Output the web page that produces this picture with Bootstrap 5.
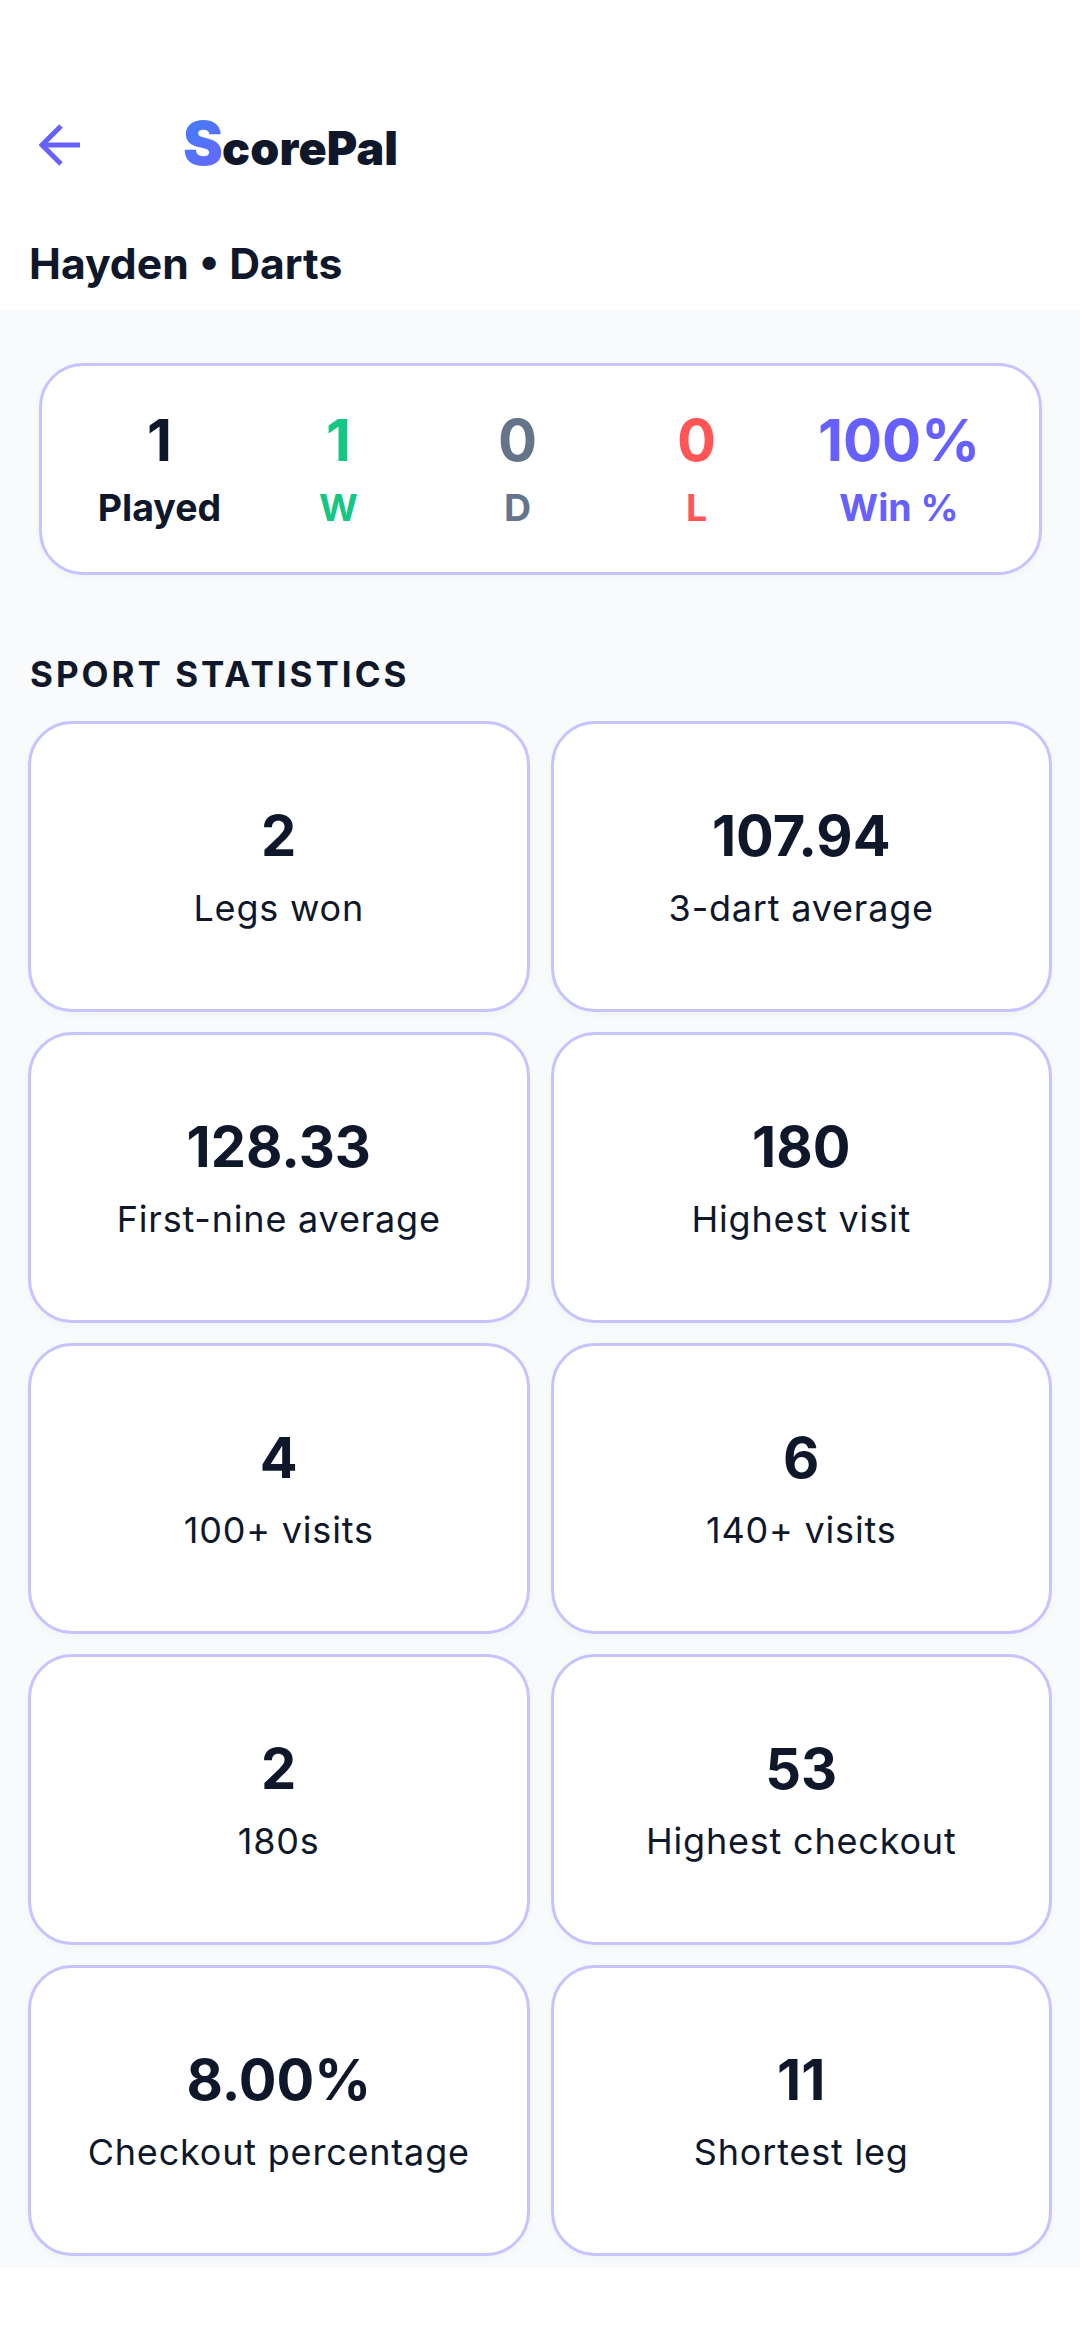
<!DOCTYPE html>
<html lang="en">
<head>
<meta charset="utf-8">
<title>ScorePal</title>
<link href="https://cdn.jsdelivr.net/npm/bootstrap@5.3.0/dist/css/bootstrap.min.css" rel="stylesheet">
<style>
body{font-family:"Inter","Liberation Sans",sans-serif;color:#0f172a;background:#fff;width:1080px;height:2340px;overflow:hidden}
.app-top{height:310px;padding-top:116px}
.head-row{height:58px;padding-left:39px}
.brand{font-family:"Inter","Liberation Sans",sans-serif;font-weight:900;font-size:46.5px;line-height:58px;margin-left:102px;letter-spacing:.2px}
.brand-s{font-size:60px;font-weight:900;letter-spacing:-1px;background:linear-gradient(135deg,#3b82f6,#6c63ff);-webkit-background-clip:text;background-clip:text;color:transparent}
.page-title{font-size:42.7px;font-weight:700;line-height:52px;margin:0;padding:64px 0 0 29px}
.sheet{background:#f8fafc;height:1958px;padding:53px 28px 0}
.summary{margin:0 10px 0 11px;height:212px;border:3px solid #c6c3ff;border-radius:44px;background:#fff;box-shadow:0 3px 8px rgba(15,23,42,.03);display:grid;grid-template-columns:179px 179px 179px 179px 226px;padding:41px 25px 0 28px}
.sum-num{font-size:58px;font-weight:700;line-height:66px}
.sum-lab{font-size:37.5px;font-weight:700;line-height:44px;margin-top:13px}
.tone-green{color:#16c784}.tone-gray{color:#64748b}.tone-red{color:#ff5555}.tone-purple{color:#6560ff}
.sect-title{font-size:35px;font-weight:700;letter-spacing:3px;line-height:40px;margin:79px 0 27px 2px}
.stat-row{--bs-gutter-x:21px;--bs-gutter-y:20px}
.stat-box{height:291px;border:3px solid #c6c3ff;border-radius:44px;background:#fff;box-shadow:0 3px 8px rgba(15,23,42,.03)}
.stat-num{font-size:56px;font-weight:700;line-height:66px}
.stat-lab{font-size:36px;font-weight:400;line-height:44px;letter-spacing:.8px;margin-top:17px}
</style>
</head>
<body>
<div class="app-top">
  <div class="head-row d-flex align-items-center">
    <svg width="42" height="42" viewBox="0 0 42 42" fill="none" stroke="#6560ff" stroke-width="5" aria-label="Back"><path d="M41 21H3"/><path d="M22 2 3 21l19 19"/></svg>
    <div class="brand"><span class="brand-s">S</span>corePal</div>
  </div>
  <h1 class="page-title">Hayden • Darts</h1>
</div>
<main class="sheet">
  <div class="summary text-center">
    <div><div class="sum-num">1</div><div class="sum-lab">Played</div></div>
    <div class="tone-green"><div class="sum-num">1</div><div class="sum-lab">W</div></div>
    <div class="tone-gray"><div class="sum-num">0</div><div class="sum-lab">D</div></div>
    <div class="tone-red"><div class="sum-num">0</div><div class="sum-lab">L</div></div>
    <div class="tone-purple"><div class="sum-num">100%</div><div class="sum-lab">Win %</div></div>
  </div>
  <h2 class="sect-title">SPORT STATISTICS</h2>
  <div class="row stat-row">
    <div class="col-6"><div class="card stat-box d-flex flex-column justify-content-center align-items-center text-center"><div class="stat-num">2</div><div class="stat-lab">Legs won</div></div></div>
    <div class="col-6"><div class="card stat-box d-flex flex-column justify-content-center align-items-center text-center"><div class="stat-num">107.94</div><div class="stat-lab">3-dart average</div></div></div>
    <div class="col-6"><div class="card stat-box d-flex flex-column justify-content-center align-items-center text-center"><div class="stat-num">128.33</div><div class="stat-lab">First-nine average</div></div></div>
    <div class="col-6"><div class="card stat-box d-flex flex-column justify-content-center align-items-center text-center"><div class="stat-num">180</div><div class="stat-lab">Highest visit</div></div></div>
    <div class="col-6"><div class="card stat-box d-flex flex-column justify-content-center align-items-center text-center"><div class="stat-num">4</div><div class="stat-lab">100+ visits</div></div></div>
    <div class="col-6"><div class="card stat-box d-flex flex-column justify-content-center align-items-center text-center"><div class="stat-num">6</div><div class="stat-lab">140+ visits</div></div></div>
    <div class="col-6"><div class="card stat-box d-flex flex-column justify-content-center align-items-center text-center"><div class="stat-num">2</div><div class="stat-lab">180s</div></div></div>
    <div class="col-6"><div class="card stat-box d-flex flex-column justify-content-center align-items-center text-center"><div class="stat-num">53</div><div class="stat-lab">Highest checkout</div></div></div>
    <div class="col-6"><div class="card stat-box d-flex flex-column justify-content-center align-items-center text-center"><div class="stat-num">8.00%</div><div class="stat-lab">Checkout percentage</div></div></div>
    <div class="col-6"><div class="card stat-box d-flex flex-column justify-content-center align-items-center text-center"><div class="stat-num">11</div><div class="stat-lab">Shortest leg</div></div></div>
  </div>
</main>
<script src="https://cdn.jsdelivr.net/npm/bootstrap@5.3.0/dist/js/bootstrap.bundle.min.js"></script>
</body>
</html>
